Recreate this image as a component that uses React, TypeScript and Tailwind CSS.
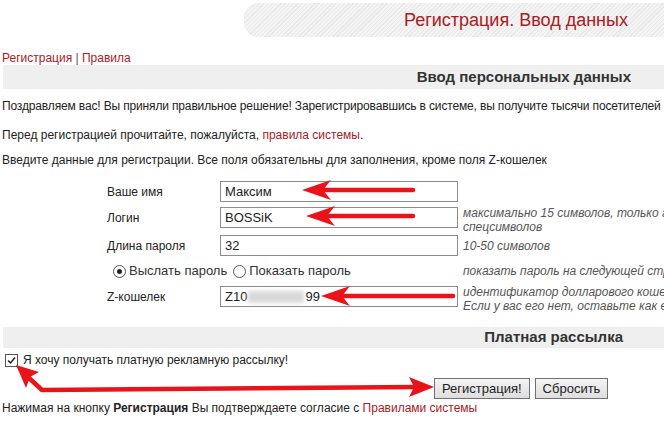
import React from "react";

function Arrows() {
  return (
    <svg className="absolute left-0 top-0 pointer-events-none" width="664" height="422" viewBox="0 0 664 422">
      <g fill="#e8141a" stroke="none">
        <polygon points="302,190 331,180 323,190 331,200" />
        <polygon points="306,216 335,206 327,216 335,226" />
        <polygon points="321,296 350,286 342,296 350,306" />
        <polygon points="16,365 39,372 30,377 26,388" />
        <polygon points="434,387 409,377 414,387 409,397" />
      </g>
      <g stroke="#e8141a" strokeWidth="4.5" fill="none" strokeLinecap="round" strokeLinejoin="round">
        <line x1="324" y1="190" x2="413" y2="190" />
        <line x1="328" y1="216" x2="413" y2="216" />
        <line x1="343" y1="296" x2="453" y2="296" />
        <polyline points="416,387 42,390 29,378" />
      </g>
    </svg>
  );
}

export default function App() {
  const red = "text-[#a8201f]";
  const label = "w-[113px] h-[21px] shrink-0 flex items-center";
  const input = "w-[238px] h-[21px] shrink-0 border border-[#8c8c8c] px-[4px] flex items-center text-[13px] text-[#222]";
  return (
    <div className="relative w-[664px] h-[422px] overflow-hidden bg-white whitespace-nowrap text-[12px] text-[#222] font-['Liberation_Sans',Arial,sans-serif]">
      <div className="ml-[244px] mt-[3px] h-[34px] rounded-l-[14px] bg-[repeating-linear-gradient(135deg,#f3f3f3_0px,#f3f3f3_2px,#e9e9e9_2px,#e9e9e9_3px)] flex items-center justify-end pr-[36px]">
        <span className={`text-[18px] ${red}`}>Регистрация. Ввод данных</span>
      </div>

      <div className={`mt-[14px] ml-[2px] leading-[14px] ${red}`}>
        Регистрация <span className="text-[#555]">|</span> Правила
      </div>

      <div className="ml-[3px] h-[24px] bg-[#efefef] flex items-center justify-end pr-[33px]">
        <span className="text-[15px] font-bold text-[#333]">Ввод персональных данных</span>
      </div>

      <p className="ml-[2px] mt-[10px] leading-[14px] tracking-[-0.15px]">
        Поздравляем вас! Вы приняли правильное решение! Зарегистрировавшись в системе, вы получите тысячи посетителей
      </p>
      <p className="ml-[2px] mt-[15px] leading-[14px]">
        Перед регистрацией прочитайте, пожалуйста, <span className={red}>правила системы</span>.
      </p>
      <p className="ml-[2px] mt-[11px] leading-[14px]">
        Введите данные для регистрации. Все поля обязательны для заполнения, кроме поля Z-кошелек
      </p>

      <div className="ml-[107px] mt-[14px] flex flex-col">
        <div className="flex">
          <div className={label}>Ваше имя</div>
          <div className={input}>Максим</div>
        </div>

        <div className="flex mt-[5px]">
          <div className={label}>Логин</div>
          <div className={input}>BOSSiK</div>
          <div className="ml-[5px] italic text-[#555] leading-[14px] mt-[-1px]">
            <div>максимально 15 символов, только английские буквы и цифры без</div>
            <div>спецсимволов</div>
          </div>
        </div>

        <div className="flex mt-[1px]">
          <div className={label}>Длина пароля</div>
          <div className={input}>32</div>
          <div className="ml-[5px] italic text-[#555] flex items-center">10-50 символов</div>
        </div>

        <div className="flex mt-[5px] h-[20px] items-center">
          <div className="w-[351px] shrink-0 flex items-center pl-[6px] text-[13px] text-[#333]">
            <span className="w-[13px] h-[13px] rounded-full border border-[#555] bg-white flex items-center justify-center mr-[3px]">
              <span className="w-[5px] h-[5px] rounded-full bg-[#222]" />
            </span>
            Выслать пароль
            <span className="w-[13px] h-[13px] rounded-full border border-[#555] bg-white ml-[6px] mr-[3px]" />
            Показать пароль
          </div>
          <div className="ml-[5px] italic text-[#555]">показать пароль на следующей странице</div>
        </div>

        <div className="flex mt-[5px]">
          <div className={label}>Z-кошелек</div>
          <div className={input}>
            Z10
            <span className="inline-block w-[56px] h-[12px] mx-[1px] bg-[#d9d9d9] blur-[2px]" />
            99
          </div>
          <div className="ml-[5px] italic text-[#555] leading-[14px] mt-[-1px]">
            <div>идентификатор долларового кошелька WebMoney</div>
            <div>Если у вас его нет, оставьте как есть</div>
          </div>
        </div>
      </div>

      <div className="ml-[3px] mt-[14px] h-[21px] bg-[#efefef] flex items-center justify-end pr-[41px]">
        <span className="text-[15px] font-bold text-[#333]">Платная рассылка</span>
      </div>

      <div className="ml-[5px] mt-[5px] flex items-center h-[14px]">
        <span className="w-[13px] h-[13px] border border-[#555] bg-white flex items-center justify-center">
          <svg width="11" height="11" viewBox="0 0 11 11"><path d="M2 5.5 L4.5 8 L9 2.5" stroke="#222" strokeWidth="1.5" fill="none" /></svg>
        </span>
        <span className="ml-[5px]">Я хочу получать платную рекламную рассылку!</span>
      </div>

      <div className="flex ml-[434px] mt-[11px] gap-[5px]">
        <button className="h-[21px] px-[7px] border border-[#707070] bg-[linear-gradient(#f4f4f4,#dedede)] text-[13px] text-[#222] leading-none">Регистрация!</button>
        <button className="h-[21px] px-[7px] border border-[#707070] bg-[linear-gradient(#f4f4f4,#dedede)] text-[13px] text-[#222] leading-none">Сбросить</button>
      </div>

      <div className="ml-[2px] mt-[2px] leading-[14px]">
        Нажимая на кнопку <b>Регистрация</b> Вы подтверждаете согласие с <span className={red}>Правилами системы</span>
      </div>

      <Arrows />
    </div>
  );
}
